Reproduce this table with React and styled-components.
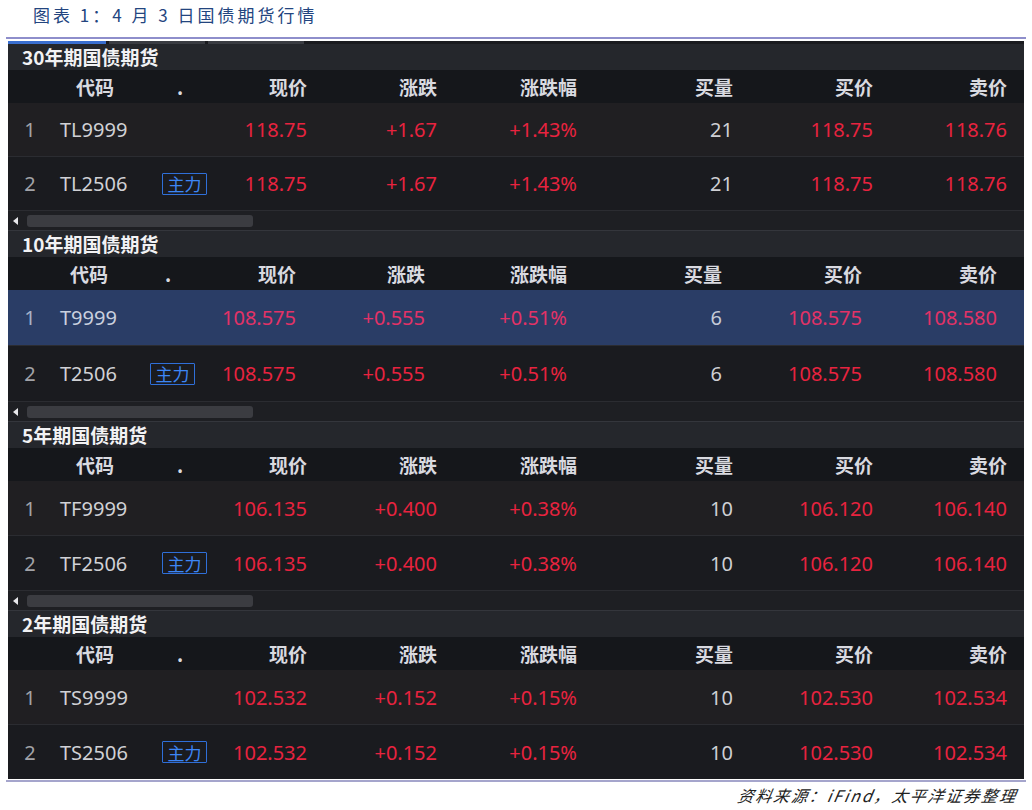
import React from "react";
import styled, { createGlobalStyle } from "styled-components";

const Global = createGlobalStyle`
  html, body { margin: 0; padding: 0; background: #ffffff; }
  body { width: 1032px; height: 810px; overflow: hidden; font-family: "Noto Sans", "Noto Sans CJK SC", sans-serif; }
`;

const Page = styled.div`
  width: 1032px;
  height: 810px;
  display: flex;
  flex-direction: column;
  & > * { flex-shrink: 0; }
`;

const Caption = styled.div`
  height: 37px;
  box-sizing: border-box;
  padding: 2px 0 0 33px;
  font-family: "Noto Sans CJK SC", sans-serif;
  font-size: 17px;
  line-height: 25px;
  letter-spacing: 3px;
  color: #23457f;
`;

const Rule = styled.div`
  margin: 0 6px;
  height: 2px;
  background: #8e8ecb;
`;

const Panel = styled.div`
  margin: 2px 8px 0 8px;
  height: 738px;
  background: #1a1b1f;
  overflow: hidden;
  display: flex;
  flex-direction: column;
  & > * { flex-shrink: 0; }
`;

const TabStrip = styled.div`
  height: 3px;
  display: flex;
  gap: 3px;
  background: #1a1b1f;
`;

const TabMark = styled.div`
  width: ${(p) => p.$w}px;
  background: ${(p) => (p.$active ? "#3a6fd0" : "#3a3c42")};
`;

const Section = styled.section`
  display: flex;
  flex-direction: column;
  & > * { flex-shrink: 0; }
`;

const SectionTitle = styled.div`
  height: ${(p) => (p.$first ? 26 : 27)}px;
  box-sizing: border-box;
  padding-left: 14px;
  background: #25272c;
  color: #f2f2f4;
  font-family: "Noto Sans CJK SC", sans-serif;
  font-weight: 700;
  font-size: 19px;
  line-height: 26px;
  border-top: ${(p) => (p.$first ? "none" : "1px solid #34363c")};
`;

const Grid = styled.div`
  display: grid;
  grid-template-columns: ${(p) => p.$cols};
  align-items: center;
`;

const HeadRow = styled(Grid)`
  height: 33px;
  background: #15171b;
  color: #d9dae0;
  font-family: "Noto Sans CJK SC", sans-serif;
  font-weight: 700;
  font-size: 19px;
`;

const HeadCell = styled.div`
  text-align: ${(p) => p.$align || "right"};
  padding-left: ${(p) => p.$pl || 0}px;
  white-space: nowrap;
`;

const DataRow = styled(Grid)`
  height: ${(p) => p.$h}px;
  box-sizing: border-box;
  border-bottom: 1px solid #2b2c31;
  background: ${(p) => (p.$selected ? "#2a3d66" : p.$odd ? "#201f22" : "#1a1b1f")};
  font-size: 20px;
  font-family: "Noto Sans", "Noto Sans CJK SC", sans-serif;
`;

const IndexCell = styled.div`
  text-align: center;
  padding-left: 2px;
  color: ${(p) => (p.$selected ? "#a8b2c8" : "#a2a3a8")};
`;

const CodeCell = styled.div`
  padding-left: 10px;
  color: ${(p) => (p.$selected ? "#c9d0de" : "#d0d1d5")};
  white-space: nowrap;
`;

const TagCell = styled.div`
  padding-left: 7px;
  display: flex;
`;

const MainTag = styled.span`
  display: inline-flex;
  align-items: center;
  justify-content: center;
  width: 45px;
  height: 22px;
  box-sizing: border-box;
  border: 1px solid #2f6fd8;
  border-radius: 1px;
  color: #3d86f5;
  font-family: "Noto Sans CJK SC", sans-serif;
  font-size: 17px;
  line-height: 1;
`;

const NumCell = styled.div`
  text-align: right;
  white-space: nowrap;
  color: ${(p) =>
    p.$neutral ? (p.$selected ? "#c4cbd8" : "#cfd0d4") : p.$selected ? "#e33266" : "#e8233f"};
`;

const ScrollRow = styled.div`
  height: 19px;
  display: flex;
  align-items: center;
  gap: 9px;
  padding-left: 5px;
  background: #1e1f23;
`;

const ScrollArrow = styled.div`
  width: 0;
  height: 0;
  border-top: 4px solid transparent;
  border-bottom: 4px solid transparent;
  border-right: 5px solid #e8e8ec;
`;

const ScrollThumb = styled.div`
  width: 226px;
  height: 12px;
  border-radius: 3px;
  background: #3b3c41;
`;

const Footer = styled.div`
  margin: 1px 6px 0 6px;
  border-top: 2px solid #a5a5cc;
  display: flex;
  justify-content: flex-end;
  padding-right: 8px;
`;

const Source = styled.div`
  font-family: "Noto Sans CJK SC", sans-serif;
  font-style: italic;
  font-size: 16px;
  letter-spacing: 1.9px;
  line-height: 26px;
  color: #222;
  transform: skewX(-10deg);
`;

const COLS_A = "42px 105px 60px 92px 130px 140px 156px 140px 134px 1fr";
const COLS_B = "42px 93px 62px 91px 129px 142px 155px 140px 135px 1fr";

const sections = [
  {
    title: "30年期国债期货",
    cols: COLS_A,
    codePad: 26,
    dotPad: 22,
    rowH: 54,
    rows: [
      ["TL9999", false, "118.75", "+1.67", "+1.43%", "21", "118.75", "118.76"],
      ["TL2506", true, "118.75", "+1.67", "+1.43%", "21", "118.75", "118.76"],
    ],
  },
  {
    title: "10年期国债期货",
    cols: COLS_B,
    codePad: 20,
    dotPad: 22,
    rowH: 56,
    selectedFirst: true,
    rows: [
      ["T9999", false, "108.575", "+0.555", "+0.51%", "6", "108.575", "108.580"],
      ["T2506", true, "108.575", "+0.555", "+0.51%", "6", "108.575", "108.580"],
    ],
  },
  {
    title: "5年期国债期货",
    cols: COLS_A,
    codePad: 26,
    dotPad: 22,
    rowH: 55,
    rows: [
      ["TF9999", false, "106.135", "+0.400", "+0.38%", "10", "106.120", "106.140"],
      ["TF2506", true, "106.135", "+0.400", "+0.38%", "10", "106.120", "106.140"],
    ],
  },
  {
    title: "2年期国债期货",
    cols: COLS_A,
    codePad: 26,
    dotPad: 22,
    rowH: 55,
    last: true,
    rows: [
      ["TS9999", false, "102.532", "+0.152", "+0.15%", "10", "102.530", "102.534"],
      ["TS2506", true, "102.532", "+0.152", "+0.15%", "10", "102.530", "102.534"],
    ],
  },
];

function FuturesSection({ s, first }) {
  return (
    <Section>
      <SectionTitle $first={first}>{s.title}</SectionTitle>
      <HeadRow $cols={s.cols}>
        <HeadCell />
        <HeadCell $align="left" $pl={s.codePad}>代码</HeadCell>
        <HeadCell $align="left" $pl={s.dotPad}>.</HeadCell>
        <HeadCell>现价</HeadCell>
        <HeadCell>涨跌</HeadCell>
        <HeadCell>涨跌幅</HeadCell>
        <HeadCell>买量</HeadCell>
        <HeadCell>买价</HeadCell>
        <HeadCell>卖价</HeadCell>
        <HeadCell />
      </HeadRow>
      {s.rows.map((r, i) => {
        const sel = s.selectedFirst && i === 0;
        return (
          <DataRow key={r[0]} $cols={s.cols} $h={s.rowH} $odd={i === 0} $selected={sel}>
            <IndexCell $selected={sel}>{i + 1}</IndexCell>
            <CodeCell $selected={sel}>{r[0]}</CodeCell>
            <TagCell>{r[1] ? <MainTag>主力</MainTag> : null}</TagCell>
            <NumCell $selected={sel}>{r[2]}</NumCell>
            <NumCell $selected={sel}>{r[3]}</NumCell>
            <NumCell $selected={sel}>{r[4]}</NumCell>
            <NumCell $selected={sel} $neutral>{r[5]}</NumCell>
            <NumCell $selected={sel}>{r[6]}</NumCell>
            <NumCell $selected={sel}>{r[7]}</NumCell>
            <div />
          </DataRow>
        );
      })}
      {!s.last && (
        <ScrollRow>
          <ScrollArrow />
          <ScrollThumb />
        </ScrollRow>
      )}
    </Section>
  );
}

export default function App() {
  return (
    <Page>
      <Global />
      <Caption>图表 1：4 月 3 日国债期货行情</Caption>
      <Rule />
      <Panel>
        <TabStrip>
          <TabMark $w={98} $active />
          <TabMark $w={96} />
          <TabMark $w={96} />
        </TabStrip>
        {sections.map((s, i) => (
          <FuturesSection key={s.title} s={s} first={i === 0} />
        ))}
      </Panel>
      <Footer>
        <Source>资料来源：iFind，太平洋证券整理</Source>
      </Footer>
    </Page>
  );
}
